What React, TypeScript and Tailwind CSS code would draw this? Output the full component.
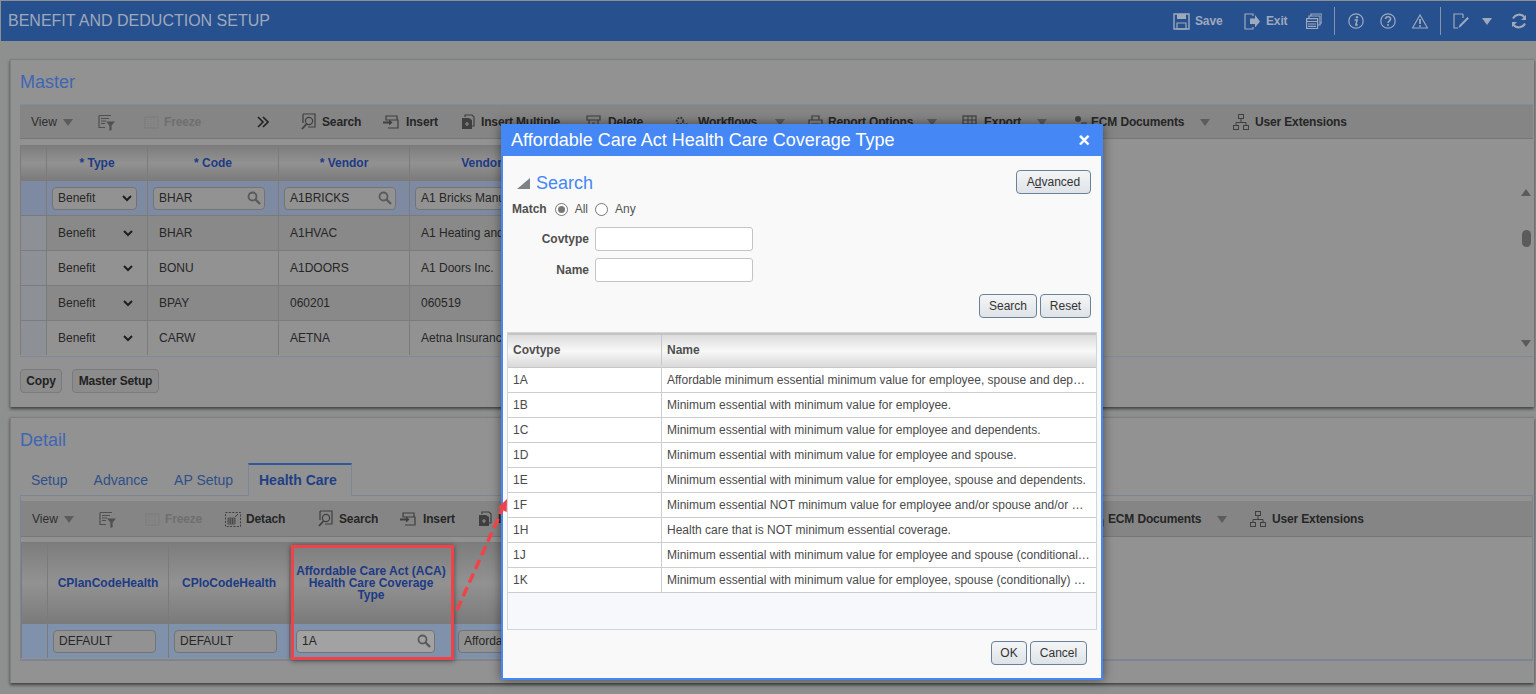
import React from "react";

const Ic = ({ c = "", children, w = 16, h = 16 }: { c?: string; children: React.ReactNode; w?: number; h?: number }) => (
  <svg width={w} height={h} viewBox={`0 0 ${w} ${h}`} fill="none" stroke="currentColor" strokeWidth="1.2" className={`shrink-0 ${c}`}>
    {children}
  </svg>
);

const Caret = ({ c = "" }: { c?: string }) => (
  <svg width="10" height="7" viewBox="0 0 10 7" className={`shrink-0 ${c}`}><path d="M0 0h10L5 7z" fill="currentColor" /></svg>
);

const FilterI = () => (
  <Ic w={17} h={17}><path d="M1 1.5h12M1 1.5v12h6M3 4.5h8M3 7h5M3 9.5h4" stroke="#505050" /><path d="M8 7.5h9l-3.4 4v4.5l-2.2 1v-5.5z" fill="#505050" stroke="none" /></Ic>
);
const FreezeI = () => (
  <Ic w={15} h={15}><g stroke="#7d7d7d" strokeWidth="1"><rect x="1" y="2" width="13" height="11" /><path d="M4 2v11M7 2v11M10 2v11" strokeDasharray="1 1" /></g></Ic>
);
const SearchI = () => (
  <Ic w={15} h={18}><path d="M2 1h12v13H7M2 1v9" stroke="#3f3f3f" /><circle cx="8" cy="8" r="3.6" stroke="#3f3f3f" /><path d="M5.5 11L1 16" stroke="#3f3f3f" strokeWidth="1.8" /></Ic>
);
const InsertI = () => (
  <Ic w={16} h={14}><path d="M3 1h11v4H3zM5 5h10v4M5 13h10V9" stroke="#3f3f3f" /><path d="M0 7.5h7" stroke="#3f3f3f" strokeWidth="2" /><path d="M6 4.5l3.5 3-3.5 3z" fill="#3f3f3f" stroke="none" /></Ic>
);
const MultiI = () => (
  <Ic w={13} h={16}><path d="M3 3V1h7l2 2v9h-2" stroke="#3f3f3f" /><path d="M0 4h7l3 2v9H0z" fill="#3f3f3f" stroke="none" /><path d="M5 8v4M3 10h4" stroke="#8a8a8a" /></Ic>
);
const DeleteI = () => (
  <Ic w={15} h={14}><path d="M1 1h13v4H1zM3 5v8h9V5M6 8h3" stroke="#3f3f3f" /></Ic>
);
const GearI = () => (
  <Ic w={16} h={15}><circle cx="6" cy="6" r="3.2" stroke="#3f3f3f" strokeWidth="2" strokeDasharray="2 1" /><circle cx="12" cy="11" r="2.3" stroke="#3f3f3f" strokeWidth="1.6" strokeDasharray="1.4 1" /></Ic>
);
const PrintI = () => (
  <Ic w={15} h={14}><path d="M4 5V1h7v4M1 5h13v6H1zM4 9h7v4H4z" stroke="#3f3f3f" /></Ic>
);
const ExportI = () => (
  <Ic w={15} h={14}><rect x="1" y="1" width="13" height="12" stroke="#3f3f3f" /><path d="M1 5h13M1 9h13M6 1v12M10 1v12" stroke="#3f3f3f" strokeWidth="1" /></Ic>
);
const EcmI = () => (
  <Ic w={16} h={15}><circle cx="7" cy="4" r="3" fill="#3f3f3f" stroke="none" /><path d="M2 14c0-4 2-5 5-5s5 1 5 5z" fill="#3f3f3f" stroke="none" /><path d="M11 8h4v6h-4z" stroke="#3f3f3f" /></Ic>
);
const TreeI = () => (
  <Ic w={16} h={16}><g stroke="#3f3f3f" strokeWidth="1"><rect x="5.5" y="0.5" width="5" height="4" /><rect x="0.5" y="11.5" width="5" height="4" /><rect x="10.5" y="11.5" width="5" height="4" /><path d="M8 4.5v4M3 11.5v-3h10v3" /></g></Ic>
);
const DetachI = () => (
  <Ic w={16} h={15}><rect x="0.5" y="0.5" width="15" height="14" stroke="#3f3f3f" strokeWidth="1" strokeDasharray="2 1.4" /><path d="M3 6h7v6H3zM3 8h7M3 10h7M5.3 6v6M7.6 6v6" stroke="#3f3f3f" strokeWidth="0.8" /><path d="M10 5l3-3" stroke="#3f3f3f" strokeWidth="1" /></Ic>
);
const Mag = ({ c = "text-[#5a5a5a]" }: { c?: string }) => (
  <svg width="14" height="14" viewBox="0 0 14 14" fill="none" stroke="currentColor" className={c}><circle cx="5.5" cy="5.5" r="4" strokeWidth="1.8" /><path d="M8.5 8.5L13 13" strokeWidth="2.4" /></svg>
);
const Chevron = () => (
  <svg width="10" height="7" viewBox="0 0 10 7" fill="none" stroke="#1f1f1f" strokeWidth="2" className="shrink-0"><path d="M1 1l4 4 4-4" /></svg>
);

const Tb = ({ m, t, icon, gap, tw, off = false }: { m: string; t: string; icon: React.ReactNode; gap: string; tw: string; off?: boolean }) => (
  <div className={`flex items-center shrink-0 ${m} ${gap}`}>
    {icon}
    <span className={`${tw} text-[12px] tracking-[-0.15px] font-bold whitespace-nowrap ${off ? "text-[#6f6f6f]" : "text-[#262626]"}`}>{t}</span>
  </div>
);

const ViewBtn = () => (
  <div className="flex items-center gap-[6px] text-[#2e2e2e] text-[12px] shrink-0">
    <span className="w-[26px]">View</span>
    <Caret c="text-[#5c5c5c]" />
  </div>
);

const HeadCell = ({ w, children }: { w: string; children?: React.ReactNode }) => (
  <div className={`${w} shrink-0 h-full border-r border-[#7b7b7b] flex items-center justify-center text-center text-[12px] font-bold text-[#1d3a85] leading-[12px] bg-gradient-to-b from-[#7d7d7d] via-[#929292] to-[#7b7b7b]`}>
    {children}
  </div>
);

const Box = ({ w, children, c = "bg-[#929292]" }: { w: string; children: React.ReactNode; c?: string }) => (
  <div className={`${w} h-[23px] ${c} border border-[#747474] rounded-[4px] flex items-center justify-between pl-[5px] pr-[3px] text-[12px] text-[#262626] shrink-0`}>
    {children}
  </div>
);

const rows = [
  ["BHAR", "A1HVAC", "A1 Heating and Cooling", "bg-[#898989]"],
  ["BONU", "A1DOORS", "A1 Doors Inc.", "bg-[#929292]"],
  ["BPAY", "060201", "060519", "bg-[#898989]"],
  ["CARW", "AETNA", "Aetna Insurance Co.", "bg-[#929292]"],
];

const modalRows = [
  ["1A", "Affordable minimum essential minimum value for employee, spouse and dep…"],
  ["1B", "Minimum essential with minimum value for employee."],
  ["1C", "Minimum essential with minimum value for employee and dependents."],
  ["1D", "Minimum essential with minimum value for employee and spouse."],
  ["1E", "Minimum essential with minimum value for employee, spouse and dependents."],
  ["1F", "Minimum essential NOT minimum value for employee and/or spouse and/or …"],
  ["1H", "Health care that is NOT minimum essential coverage."],
  ["1J", "Minimum essential with minimum value for employee and spouse (conditional…"],
  ["1K", "Minimum essential with minimum value for employee, spouse (conditionally) …"],
];

const DimBtn = ({ t, w, m = "" }: { t: string; w: string; m?: string }) => (
  <div className={`${m} ${w} h-[24px] flex items-center justify-center rounded-[4px] border border-[#7a7a7a] bg-[#8c8c8c] text-[12px] tracking-[-0.15px] font-bold text-[#222] whitespace-nowrap`}>{t}</div>
);

const MBtn = ({ children, w }: { children: React.ReactNode; w: string }) => (
  <div className={`${w} h-[24px] flex items-center justify-center rounded-[4px] border border-[#6b8199] bg-gradient-to-b from-[#f4f5f6] to-[#dfe3e7] text-[12px] text-[#333] shrink-0`}>{children}</div>
);

const SharedTools = () => (
  <>
    <Tb m="ml-[23px]" t="Insert" tw="w-[32px]" gap="gap-[7px]" icon={<InsertI />} />
    <Tb m="ml-[24px]" t="Insert Multiple" tw="w-[82px]" gap="gap-[6px]" icon={<MultiI />} />
    <Tb m="ml-[23px]" t="Delete" tw="w-[37px]" gap="gap-[7px]" icon={<DeleteI />} />
    <Tb m="ml-[29px]" t="Workflows" tw="w-[61px]" gap="gap-[8px]" icon={<GearI />} />
    <Caret c="ml-[16px] text-[#5c5c5c]" />
    <Tb m="ml-[23px]" t="Report Options" tw="w-[87px]" gap="gap-[5px]" icon={<PrintI />} />
    <Caret c="ml-[12px] text-[#5c5c5c]" />
    <Tb m="ml-[25px]" t="Export" tw="w-[39px]" gap="gap-[7px]" icon={<ExportI />} />
    <Caret c="ml-[14px] text-[#5c5c5c]" />
    <Tb m="ml-[24px]" t="ECM Documents" tw="w-[94px]" gap="gap-[4px]" icon={<EcmI />} />
    <Caret c="ml-[15px] text-[#5c5c5c]" />
    <Tb m="ml-[23px]" t="User Extensions" tw="w-[93px]" gap="gap-[6px]" icon={<TreeI />} />
  </>
);

export default function App() {
  return (
    <div className="relative w-[1536px] h-[694px] overflow-hidden bg-[#8e8f8f] text-[12px] font-['Liberation_Sans',Arial,sans-serif]">
      {/* Header */}
      <div className="ml-px mt-px h-[40px] bg-[#27508f] flex items-center pl-[7px] text-[#9fa9bc]">
        <div className="text-[16px] whitespace-nowrap">BENEFIT AND DEDUCTION SETUP</div>
        <div className="ml-auto flex items-center h-full">
          <Ic w={17} h={17}><path d="M1 1h15v15H1z" strokeWidth="1.4" /><path d="M4 1h9v5H4z" fill="currentColor" stroke="none" /><path d="M4 10h9v6H4z" strokeWidth="1.2" /></Ic>
          <span className="ml-[5px] font-bold w-[27px] tracking-[-0.15px]">Save</span>
          <Ic c="ml-[22px]" w={16} h={17}><path d="M9 3V1H1v15h8v-2" strokeWidth="1.2" /><path d="M6 5.5h5V2l5 6.5-5 6V11H6z" fill="currentColor" stroke="none" /></Ic>
          <span className="ml-[6px] font-bold tracking-[-0.15px] w-[22px]">Exit</span>
          <Ic c="ml-[18px]" w={16} h={16}><path d="M5 3V1h11v9h-2" /><path d="M3 5V3h11v9h-2" /><path d="M0.6 5.6h11v10h-11zM0.6 8.5h11M2 11h8M2 13.4h8" /></Ic>
          <div className="ml-[12px] w-px h-[28px] bg-[#8393ad]" />
          <Ic c="ml-[13px]" w={16} h={16}><circle cx="8" cy="8" r="7.2" /><circle cx="9" cy="4.2" r="1.2" fill="currentColor" stroke="none" /><path d="M6.5 7h2.6L7.8 12h2" strokeWidth="1.5" /></Ic>
          <Ic c="ml-[16px]" w={16} h={16}><circle cx="8" cy="8" r="7.2" /><path d="M5.6 6c0-3 5-3 5 0 0 1.8-2.5 1.8-2.5 4" strokeWidth="1.6" /><circle cx="8" cy="12" r="1" fill="currentColor" stroke="none" /></Ic>
          <Ic c="ml-[16px]" w={16} h={15}><path d="M8 1L15.5 14H.5z" /><path d="M8 5v5" strokeWidth="1.8" /><circle cx="8" cy="12" r="1" fill="currentColor" stroke="none" /></Ic>
          <div className="ml-[12px] w-px h-[28px] bg-[#8393ad]" />
          <Ic c="ml-[12px]" w={16} h={16}><path d="M10 1H1v14h4M10 1v4" /><path d="M5.5 15l1-3 8-8 1.4 1.4-8 8z" fill="currentColor" stroke="none" /></Ic>
          <Caret c="ml-[13px]" />
          <Ic c="ml-[19px] mr-[9px]" w={16} h={16}><path d="M13.5 4A7 7 0 0 0 2 5.5M2.5 12A7 7 0 0 0 14 10.5" strokeWidth="2" /><path d="M15 2v5h-5z M1 14v-5h5z" fill="currentColor" stroke="none" /></Ic>
        </div>
      </div>

      {/* Master */}
      <section className="ml-[10px] mt-[18px] w-[1524px] h-[348px] bg-[#929292] border-t border-l border-[#7f7f7f] shadow-[0_2px_3px_rgba(0,0,0,0.55)] pl-[9px] pt-[10px]">
        <h2 className="text-[18px] leading-[24px] text-[#3f66b5]">Master</h2>
        <div className="mt-[10px] w-[1513px] h-[35px] bg-[#858585] border-t border-b border-t-[#7f8b9e] border-b-[#777] flex items-center pl-[11px] pt-[1px]">
          <ViewBtn />
          <div className="ml-[25px]"><FilterI /></div>
          <Tb m="ml-[29px]" t="Freeze" tw="w-[38px]" gap="gap-[5px]" icon={<FreezeI />} off />
          <svg width="12" height="12" viewBox="0 0 12 12" fill="none" stroke="#222" strokeWidth="1.6" className="ml-[55px] shrink-0"><path d="M1 1l5 5-5 5M6 1l5 5-5 5" /></svg>
          <Tb m="ml-[32px]" t="Search" tw="w-[38px]" gap="gap-[6px]" icon={<SearchI />} />
          <SharedTools />
        </div>
        <div className="mt-[6px] w-[1513px] h-[212px] border-b border-[#7f8a99] flex">
          <div className="w-[1080px]">
            <div className="h-[35px] flex border-t border-l border-[#7b7b7b]">
              <HeadCell w="w-[26px]" />
              <HeadCell w="w-[101px]">* Type</HeadCell>
              <HeadCell w="w-[131px]">* Code</HeadCell>
              <HeadCell w="w-[131px]">* Vendor</HeadCell>
              <HeadCell w="w-[180px]">Vendor Name</HeadCell>
            </div>
            <div className="h-[35px] flex items-center bg-[#7d8aa1] border-t border-l border-[#7b7b7b]">
              <div className="w-[26px] h-full border-r border-[#7b7b7b]" />
              <div className="w-[101px] h-full border-r border-[#7b7b7b] flex items-center pl-[5px]">
                <Box w="w-[85px]"><span>Benefit</span><span className="mr-[1px]"><Chevron /></span></Box>
              </div>
              <div className="w-[131px] h-full border-r border-[#7b7b7b] flex items-center pl-[5px]">
                <Box w="w-[112px]"><span>BHAR</span><Mag /></Box>
              </div>
              <div className="w-[131px] h-full border-r border-[#7b7b7b] flex items-center pl-[5px]">
                <Box w="w-[112px]"><span>A1BRICKS</span><Mag /></Box>
              </div>
              <div className="w-[180px] h-full border-r border-[#7b7b7b] flex items-center pl-[5px]">
                <Box w="w-[170px]"><span>A1 Bricks Manufacturing</span></Box>
              </div>
            </div>
            {rows.map((r) => (
              <div key={r[0] + r[1]} className={`h-[35px] flex items-center border-t border-l border-[#7b7b7b] text-[#262626] ${r[3]}`}>
                <div className="w-[26px] h-full border-r border-[#7b7b7b] bg-[#8d9096]" />
                <div className="w-[101px] h-full border-r border-[#7b7b7b] flex items-center justify-between pl-[11px] pr-[14px]"><span>Benefit</span><Chevron /></div>
                <div className="w-[131px] h-full border-r border-[#7b7b7b] flex items-center pl-[11px]">{r[0]}</div>
                <div className="w-[131px] h-full border-r border-[#7b7b7b] flex items-center pl-[11px]">{r[1]}</div>
                <div className="w-[180px] h-full border-r border-[#7b7b7b] flex items-center pl-[11px] whitespace-nowrap overflow-hidden">{r[2]}</div>
              </div>
            ))}
          </div>
          <div className="ml-auto w-[14px] mt-[44px] mb-[9px] flex flex-col items-center text-[#5b5b5b]">
            <svg width="10" height="7" viewBox="0 0 10 7"><path d="M0 7h10L5 0z" fill="currentColor" /></svg>
            <div className="w-[9px] h-[17px] rounded-full bg-[#5b5b5b] mt-[34px]" />
            <svg width="10" height="7" viewBox="0 0 10 7" className="mt-auto"><path d="M0 0h10L5 7z" fill="currentColor" /></svg>
          </div>
        </div>
        <div className="mt-[12px] flex">
          <DimBtn t="Copy" w="w-[42px]" />
          <DimBtn t="Master Setup" w="w-[87px]" m="ml-[10px]" />
        </div>
      </section>

      {/* Detail */}
      <section className="ml-[10px] mt-[10px] w-[1524px] h-[266px] bg-[#929292] border-t border-l border-[#7f7f7f] shadow-[0_2px_3px_rgba(0,0,0,0.55)] pl-[9px] pt-[10px]">
        <h2 className="text-[18px] leading-[24px] text-[#3f66b5]">Detail</h2>
        <div className="mt-[11px] h-[32px] flex items-end text-[14px] text-[#2f4f8a]">
          <span className="ml-[11px] mb-[4px]">Setup</span>
          <span className="ml-[26px] mb-[4px]">Advance</span>
          <span className="ml-[26px] mb-[4px]">AP Setup</span>
          <div className="ml-[15px] w-[104px] h-[33px] border-t-[2px] border-t-[#2f5a9a] border-x border-x-[#7c8798] font-bold text-[#1f3f85] flex items-center pl-[10px] bg-[#929292] relative z-10 mb-[-1px]">Health Care</div>
        </div>
        <div className="w-[1513px] h-[166px] border border-[#7c8594] border-b-2 pt-[5px]">
          <div className="h-[36px] bg-[#858585] border-b border-[#777] flex items-center pl-[11px] pt-[1px]">
            <ViewBtn />
            <div className="ml-[25px]"><FilterI /></div>
            <Tb m="ml-[29px]" t="Freeze" tw="w-[38px]" gap="gap-[5px]" icon={<FreezeI />} off />
            <Tb m="ml-[22px]" t="Detach" tw="w-[39px]" gap="gap-[5px]" icon={<DetachI />} />
            <Tb m="ml-[33px]" t="Search" tw="w-[38px]" gap="gap-[6px]" icon={<SearchI />} />
            <SharedTools />
          </div>
          <div className="mt-[5px] w-[640px]">
            <div className="h-[81px] flex border-l border-t border-[#7b7b7b]">
              <HeadCell w="w-[26px]" />
              <HeadCell w="w-[121px]">CPlanCodeHealth</HeadCell>
              <HeadCell w="w-[121px]">CPloCodeHealth</HeadCell>
              <HeadCell w="w-[163px]"><span>Affordable Care Act (ACA)<br />Health Care Coverage<br />Type</span></HeadCell>
              <HeadCell w="w-[180px]" />
            </div>
            <div className="h-[35px] flex items-center bg-[#8091ab] border-l border-t border-[#7b7b7b]">
              <div className="w-[26px] h-full border-r border-[#7b7b7b]" />
              <div className="w-[121px] h-full border-r border-[#7b7b7b] flex items-center pl-[5px]"><Box w="w-[103px]"><span>DEFAULT</span></Box></div>
              <div className="w-[121px] h-full border-r border-[#7b7b7b] flex items-center pl-[5px]"><Box w="w-[103px]"><span>DEFAULT</span></Box></div>
              <div className="w-[163px] h-full border-r border-[#7b7b7b] flex items-center pl-[6px]"><Box w="w-[139px]" c="bg-[#a2a2a2]"><span>1A</span><Mag /></Box></div>
              <div className="w-[180px] h-full flex items-center pl-[5px]"><Box w="w-[170px]"><span>Affordable minimum</span></Box></div>
            </div>
          </div>
        </div>
      </section>

      {/* Annotation */}
      <div className="absolute left-[291px] top-[545px] w-[163px] h-[115px] border-[3px] border-[#f04347] shadow-[0_1px_5px_rgba(0,0,0,0.5)]" />

      {/* Dialog */}
      <div className="absolute left-[501px] top-[124px] w-[602px] h-[556px] bg-[#f9f9f9] border-2 border-t-0 border-[#4487f5] shadow-[0_0_10px_rgba(0,0,0,0.5)] flex flex-col">
        <div className="h-[32px] -mx-[2px] bg-[#4487f5] flex items-center justify-between pl-[10px] pr-[13px] text-white shrink-0">
          <span className="text-[18px] whitespace-nowrap">Affordable Care Act Health Care Coverage Type</span>
          <span className="text-[20px] font-bold leading-none">×</span>
        </div>
        <div className="h-[176px] shrink-0 text-[#444]">
          <div className="flex items-start justify-between pl-[14px] pr-[10px] pt-[14px]">
            <div className="flex items-center gap-[6px] mt-[2px]">
              <svg width="13" height="11" viewBox="0 0 13 11"><path d="M13 0v11H0z" fill="#7d8285" /></svg>
              <span className="text-[18px] leading-[22px] text-[#4487f5]">Search</span>
            </div>
            <MBtn w="w-[75px]"><span>A<u>d</u>vanced</span></MBtn>
          </div>
          <div className="flex items-center pl-[9px] mt-[7px] h-[16px]">
            <b className="text-[#4f4f4f]">Match</b>
            <span className="ml-[8px] w-[13px] h-[13px] rounded-full border border-[#767676] bg-white flex items-center justify-center"><span className="w-[7px] h-[7px] rounded-full bg-[#777]" /></span>
            <span className="ml-[7px] text-[#555]">All</span>
            <span className="ml-[7px] w-[13px] h-[13px] rounded-full border border-[#767676] bg-white" />
            <span className="ml-[7px] text-[#555]">Any</span>
          </div>
          <div className="flex items-center mt-[10px]">
            <span className="w-[86px] text-right font-bold text-[#4f4f4f]">Covtype</span>
            <div className="ml-[6px] w-[158px] h-[24px] bg-white border border-[#c4c4c4] rounded-[3px]" />
          </div>
          <div className="flex items-center mt-[7px]">
            <span className="w-[86px] text-right font-bold text-[#4f4f4f]">Name</span>
            <div className="ml-[6px] w-[158px] h-[24px] bg-white border border-[#c4c4c4] rounded-[3px]" />
          </div>
          <div className="flex justify-end gap-[3px] pr-[10px] mt-[12px]">
            <MBtn w="w-[58px]">Search</MBtn>
            <MBtn w="w-[51px]">Reset</MBtn>
          </div>
        </div>
        <div className="mx-[4px] w-[590px] h-[298px] shrink-0 border border-[#cfd5dc] bg-[#f6f8fb]">
          <div className="h-[35px] flex border-b border-[#c8c8c8] border-t-2 border-t-[#c4c4c4] pb-[2px] bg-gradient-to-b from-[#dcdcdc] via-[#f8f8f8] to-[#d9d9d9] font-bold text-[#4f4f4f]">
            <div className="w-[154px] border-r border-[#c8c8c8] flex items-center pl-[5px]">Covtype</div>
            <div className="flex-1 flex items-center pl-[5px]">Name</div>
          </div>
          {modalRows.map((r) => (
            <div key={r[0]} className="h-[25px] flex bg-white border-b border-[#cdcdcd] text-[#4a4a4a]">
              <div className="w-[154px] border-r border-[#cdcdcd] flex items-center pl-[5px]">{r[0]}</div>
              <div className="flex-1 flex items-center pl-[5px] whitespace-nowrap overflow-hidden">{r[1]}</div>
            </div>
          ))}
        </div>
        <div className="flex justify-end gap-[3px] pr-[14px] mt-[11px]">
          <MBtn w="w-[36px]">OK</MBtn>
          <MBtn w="w-[57px]">Cancel</MBtn>
        </div>
      </div>

      {/* Arrow */}
      <svg className="absolute left-[450px] top-[490px]" width="70" height="130" viewBox="0 0 70 130" fill="none">
        <path d="M7 120L52 20" stroke="#f04347" strokeWidth="3.5" strokeDasharray="10 5" />
        <path d="M57 9L56.7 22 47.5 17.9z" fill="#f04347" />
      </svg>
    </div>
  );
}
